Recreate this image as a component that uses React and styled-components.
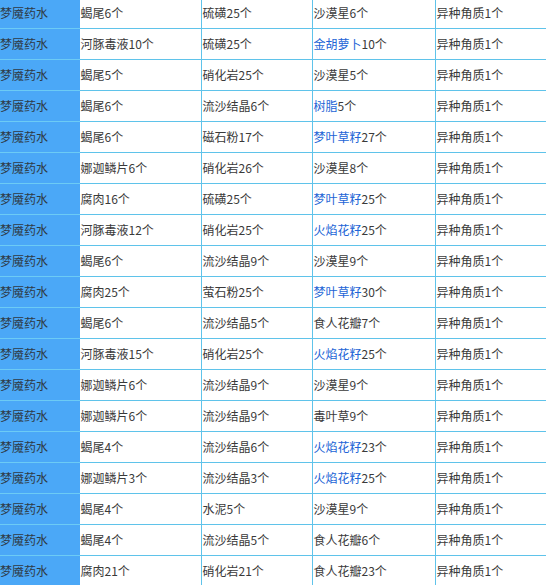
import React from "react";
import styled, { createGlobalStyle } from "styled-components";

const Global = createGlobalStyle`
  html, body { margin: 0; padding: 0; background: #fff; overflow: hidden; }
  body { font-family: "Microsoft YaHei", "Noto Sans CJK SC", "Noto Sans", sans-serif; }
`;

const Table = styled.table`
  border-collapse: collapse;
  table-layout: fixed;
  width: 600px;
  margin-top: -3px;
  font-size: 12px;
  color: #3a3a3a;
`;

const Col = styled.col`
  width: ${(p) => p.$w}px;
`;

const Row = styled.tr`
  height: 31px;
`;

const Cell = styled.td`
  border: 1px solid #5fc3ea;
  padding: 0 0 0 1px;
  height: 30px;
  line-height: 16px;
  white-space: nowrap;
  overflow: hidden;
  vertical-align: middle;
  &:first-child { border-left: none; }
`;

const Head = styled(Cell)`
  background: #4ba8f7;
  padding-left: 0;
  border-color: #6ccbf5;
  border-right-color: #4ba8f7;
  color: #2f3a45;
`;

const Link = styled.span`
  color: #2264d6;
`;

const widths = [79, 122, 111, 123, 165];

const rows = [
  ["蝎尾6个", "硫磺25个", ["沙漠星6个"], "异种角质1个"],
  ["河豚毒液10个", "硫磺25个", [null, "金胡萝卜", "10个"], "异种角质1个"],
  ["蝎尾5个", "硝化岩25个", ["沙漠星5个"], "异种角质1个"],
  ["蝎尾6个", "流沙结晶6个", [null, "树脂", "5个"], "异种角质1个"],
  ["蝎尾6个", "磁石粉17个", [null, "梦叶草籽", "27个"], "异种角质1个"],
  ["娜迦鳞片6个", "硝化岩26个", ["沙漠星8个"], "异种角质1个"],
  ["腐肉16个", "硫磺25个", [null, "梦叶草籽", "25个"], "异种角质1个"],
  ["河豚毒液12个", "硝化岩25个", [null, "火焰花籽", "25个"], "异种角质1个"],
  ["蝎尾6个", "流沙结晶9个", ["沙漠星9个"], "异种角质1个"],
  ["腐肉25个", "萤石粉25个", [null, "梦叶草籽", "30个"], "异种角质1个"],
  ["蝎尾6个", "流沙结晶5个", ["食人花瓣7个"], "异种角质1个"],
  ["河豚毒液15个", "硝化岩25个", [null, "火焰花籽", "25个"], "异种角质1个"],
  ["娜迦鳞片6个", "流沙结晶9个", ["沙漠星9个"], "异种角质1个"],
  ["娜迦鳞片6个", "流沙结晶9个", ["毒叶草9个"], "异种角质1个"],
  ["蝎尾4个", "流沙结晶6个", [null, "火焰花籽", "23个"], "异种角质1个"],
  ["娜迦鳞片3个", "流沙结晶3个", [null, "火焰花籽", "25个"], "异种角质1个"],
  ["蝎尾4个", "水泥5个", ["沙漠星9个"], "异种角质1个"],
  ["蝎尾4个", "流沙结晶5个", ["食人花瓣6个"], "异种角质1个"],
  ["腐肉21个", "硝化岩21个", ["食人花瓣23个"], "异种角质1个"],
];

function Product({ v }) {
  if (v[0] !== null) return v[0];
  return (
    <>
      <Link>{v[1]}</Link>
      {v[2]}
    </>
  );
}

export default function App() {
  return (
    <>
      <Global />
      <Table>
        <colgroup>
          {widths.map((w, i) => (
            <Col key={i} $w={w} />
          ))}
        </colgroup>
        <tbody>
          {rows.map((r, i) => (
            <Row key={i}>
              <Head>梦魇药水</Head>
              <Cell>{r[0]}</Cell>
              <Cell>{r[1]}</Cell>
              <Cell>
                <Product v={r[2]} />
              </Cell>
              <Cell>{r[3]}</Cell>
            </Row>
          ))}
        </tbody>
      </Table>
    </>
  );
}
